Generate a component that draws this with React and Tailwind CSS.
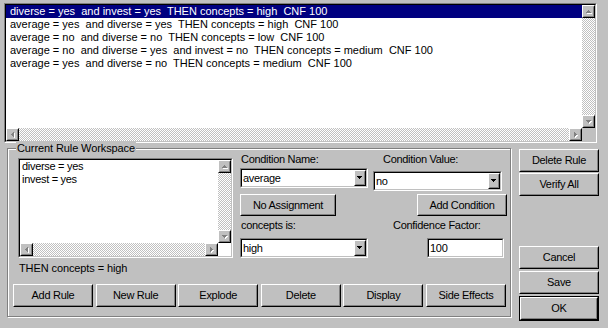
import React from 'react';

const rules = [
  'diverse = yes  and invest = yes  THEN concepts = high  CNF 100',
  'average = yes  and diverse = yes  THEN concepts = high  CNF 100',
  'average = no  and diverse = no  THEN concepts = low  CNF 100',
  'average = no  and diverse = yes  and invest = no  THEN concepts = medium  CNF 100',
  'average = yes  and diverse = no  THEN concepts = medium  CNF 100',
];

const checker = 'bg-[image:repeating-conic-gradient(#c0c0c0_0%_25%,#fff_0%_50%)] bg-[length:2px_2px]';

// little pixel triangles, drawn as rect rows
const arrows = {
  up: [[2, 0, 1, 1], [1, 1, 3, 1], [0, 2, 5, 1]],
  down: [[0, 0, 5, 1], [1, 1, 3, 1], [2, 2, 1, 1]],
  left: [[2, 0, 1, 5], [1, 1, 1, 3], [0, 2, 1, 1]],
  right: [[0, 0, 1, 5], [1, 1, 1, 3], [2, 2, 1, 1]],
};

function Arrow({ dir, disabled }) {
  const w = dir === 'up' || dir === 'down' ? 5 : 3;
  const h = dir === 'up' || dir === 'down' ? 3 : 5;
  return (
    <svg width={w + 1} height={h + 1} shapeRendering="crispEdges" className="block">
      {disabled && arrows[dir].map(([x, y, rw, rh], i) => (
        <rect key={'s' + i} x={x + 1} y={y + 1} width={rw} height={rh} fill="#fff" />
      ))}
      {arrows[dir].map(([x, y, rw, rh], i) => (
        <rect key={i} x={x} y={y} width={rw} height={rh} fill={disabled ? '#808080' : '#000'} />
      ))}
    </svg>
  );
}

function Raised({ className = '', children }) {
  return (
    <div className={`border border-t-white border-l-white border-r-black border-b-black bg-[#c0c0c0] ${className}`}>
      <div className="w-full h-full border border-t-[#c0c0c0] border-l-[#c0c0c0] border-r-[#808080] border-b-[#808080] flex items-center justify-center">
        {children}
      </div>
    </div>
  );
}

function Sunken({ className = '', inner = 'bg-white', children }) {
  return (
    <div className={`border border-t-[#808080] border-l-[#808080] border-r-white border-b-white ${className}`}>
      <div className={`w-full h-full border border-t-black border-l-black border-r-[#c0c0c0] border-b-[#c0c0c0] ${inner}`}>
        {children}
      </div>
    </div>
  );
}

function Btn({ className = '', children }) {
  return (
    <Raised className={className}>
      <span className="leading-[13px] whitespace-nowrap">{children}</span>
    </Raised>
  );
}

function Combo({ value, className = '' }) {
  return (
    <Sunken className={className} inner="bg-white flex items-center">
      <span className="flex-1 pl-[1px] leading-[13px]">{value}</span>
      <Raised className="w-[12px] h-full">
        <Arrow dir="down" />
      </Raised>
    </Sunken>
  );
}

function ListBox({ className = '', rowsClass = '', corner = 'bg-[#c0c0c0]', children }) {
  return (
    <Sunken className={className} inner="bg-white flex flex-col">
      <div className="flex flex-1 min-h-0">
        <div className={`flex-1 min-w-0 overflow-hidden ${rowsClass}`}>{children}</div>
        <div className={`w-[13px] flex flex-col ${checker}`}>
          <Raised className="w-[13px] h-[13px]"><Arrow dir="up" disabled /></Raised>
          <div className="flex-1" />
          <Raised className="w-[13px] h-[13px]"><Arrow dir="down" disabled /></Raised>
        </div>
      </div>
      <div className="flex h-[13px]">
        <div className={`flex-1 flex ${checker}`}>
          <Raised className="w-[13px] h-[13px]"><Arrow dir="left" disabled /></Raised>
          <div className="flex-1" />
          <Raised className="w-[13px] h-[13px]"><Arrow dir="right" disabled /></Raised>
        </div>
        <div className={`w-[13px] ${corner}`} />
      </div>
    </Sunken>
  );
}

export default function App() {
  return (
    <div className="w-[608px] h-[328px] bg-[#c0c0c0] text-black text-[11px] tracking-[-0.3px] font-['Liberation_Sans',Arial,sans-serif] overflow-hidden">
      {/* rule list */}
      <ListBox className="ml-[4px] mt-[3px] w-[593px] h-[140px]">
        {rules.map((r, i) => (
          <div
            key={i}
            className={`h-[13px] leading-[13px] pl-[4px] tracking-[0px] whitespace-pre ${i === 0 ? 'bg-[#000080] text-white' : ''}`}
          >
            {r}
          </div>
        ))}
      </ListBox>

      <div className="flex mt-[5px]">
        {/* workspace group */}
        <div className="relative ml-[7px] w-[504px] h-[169px] border border-[#808080] shadow-[inset_1px_1px_0_#fff,1px_1px_0_#fff]">
          <span className="absolute -top-[7px] left-[8px] px-[1px] bg-[#c0c0c0] leading-[13px] tracking-[-0.1px]">Current Rule Workspace</span>

          <div className="flex">
            <div className="ml-[10px] mt-[9px] flex flex-col">
              <ListBox className="w-[215px] h-[100px]" rowsClass="pl-[2px]" corner="bg-white">
                <div className="h-[13px] leading-[13px]">diverse = yes</div>
                <div className="h-[13px] leading-[13px]">invest = yes</div>
              </ListBox>
              <div className="mt-[4px] ml-[1px] h-[13px] leading-[13px] tracking-[-0.1px]">THEN concepts = high</div>
            </div>

            <div className="ml-[7px] mt-[4px] w-[267px] flex flex-col">
              <div className="flex h-[13px] leading-[13px]">
                <span className="w-[143px] pl-[1px]">Condition Name:</span>
                <span>Condition Value:</span>
              </div>
              <div className="flex items-start mt-[2px]">
                <Combo value="average" className="w-[128px] h-[20px]" />
                <Combo value="no" className="ml-[5px] mt-[3px] w-[129px] h-[20px]" />
              </div>
              <div className="flex justify-between mt-[3px]">
                <Btn className="w-[96px] h-[22px]">No Assignment</Btn>
                <Btn className="w-[90px] h-[22px]">Add Condition</Btn>
              </div>
              <div className="flex h-[13px] leading-[13px] mt-[3px]">
                <span className="w-[153px] pl-[1px]">concepts is:</span>
                <span>Confidence Factor:</span>
              </div>
              <div className="flex mt-[6px]">
                <Combo value="high" className="w-[128px] h-[20px]" />
                <Sunken className="ml-auto mr-[3px] w-[77px] h-[20px]" inner="bg-white flex items-center">
                  <span className="pl-[1px] leading-[13px]">100</span>
                </Sunken>
              </div>
            </div>
          </div>

          <div className="flex justify-between ml-[5px] w-[493px] mt-[9px]">
            <Btn className="w-[80px] h-[23px]">Add Rule</Btn>
            <Btn className="w-[80px] h-[23px]">New Rule</Btn>
            <Btn className="w-[80px] h-[23px]">Explode</Btn>
            <Btn className="w-[80px] h-[23px]">Delete</Btn>
            <Btn className="w-[80px] h-[23px]">Display</Btn>
            <Btn className="w-[80px] h-[23px]">Side Effects</Btn>
          </div>
        </div>

        {/* right side buttons */}
        <div className="ml-[8px] mt-[1px] w-[80px] flex flex-col">
          <Btn className="h-[23px]">Delete Rule</Btn>
          <Btn className="mt-[1px] h-[23px]">Verify All</Btn>
          <Btn className="mt-[50px] h-[23px]">Cancel</Btn>
          <Btn className="mt-[2px] h-[23px]">Save</Btn>
          <div className="mt-[2px] h-[25px] border border-black">
            <Btn className="w-full h-full">OK</Btn>
          </div>
        </div>
      </div>
    </div>
  );
}
